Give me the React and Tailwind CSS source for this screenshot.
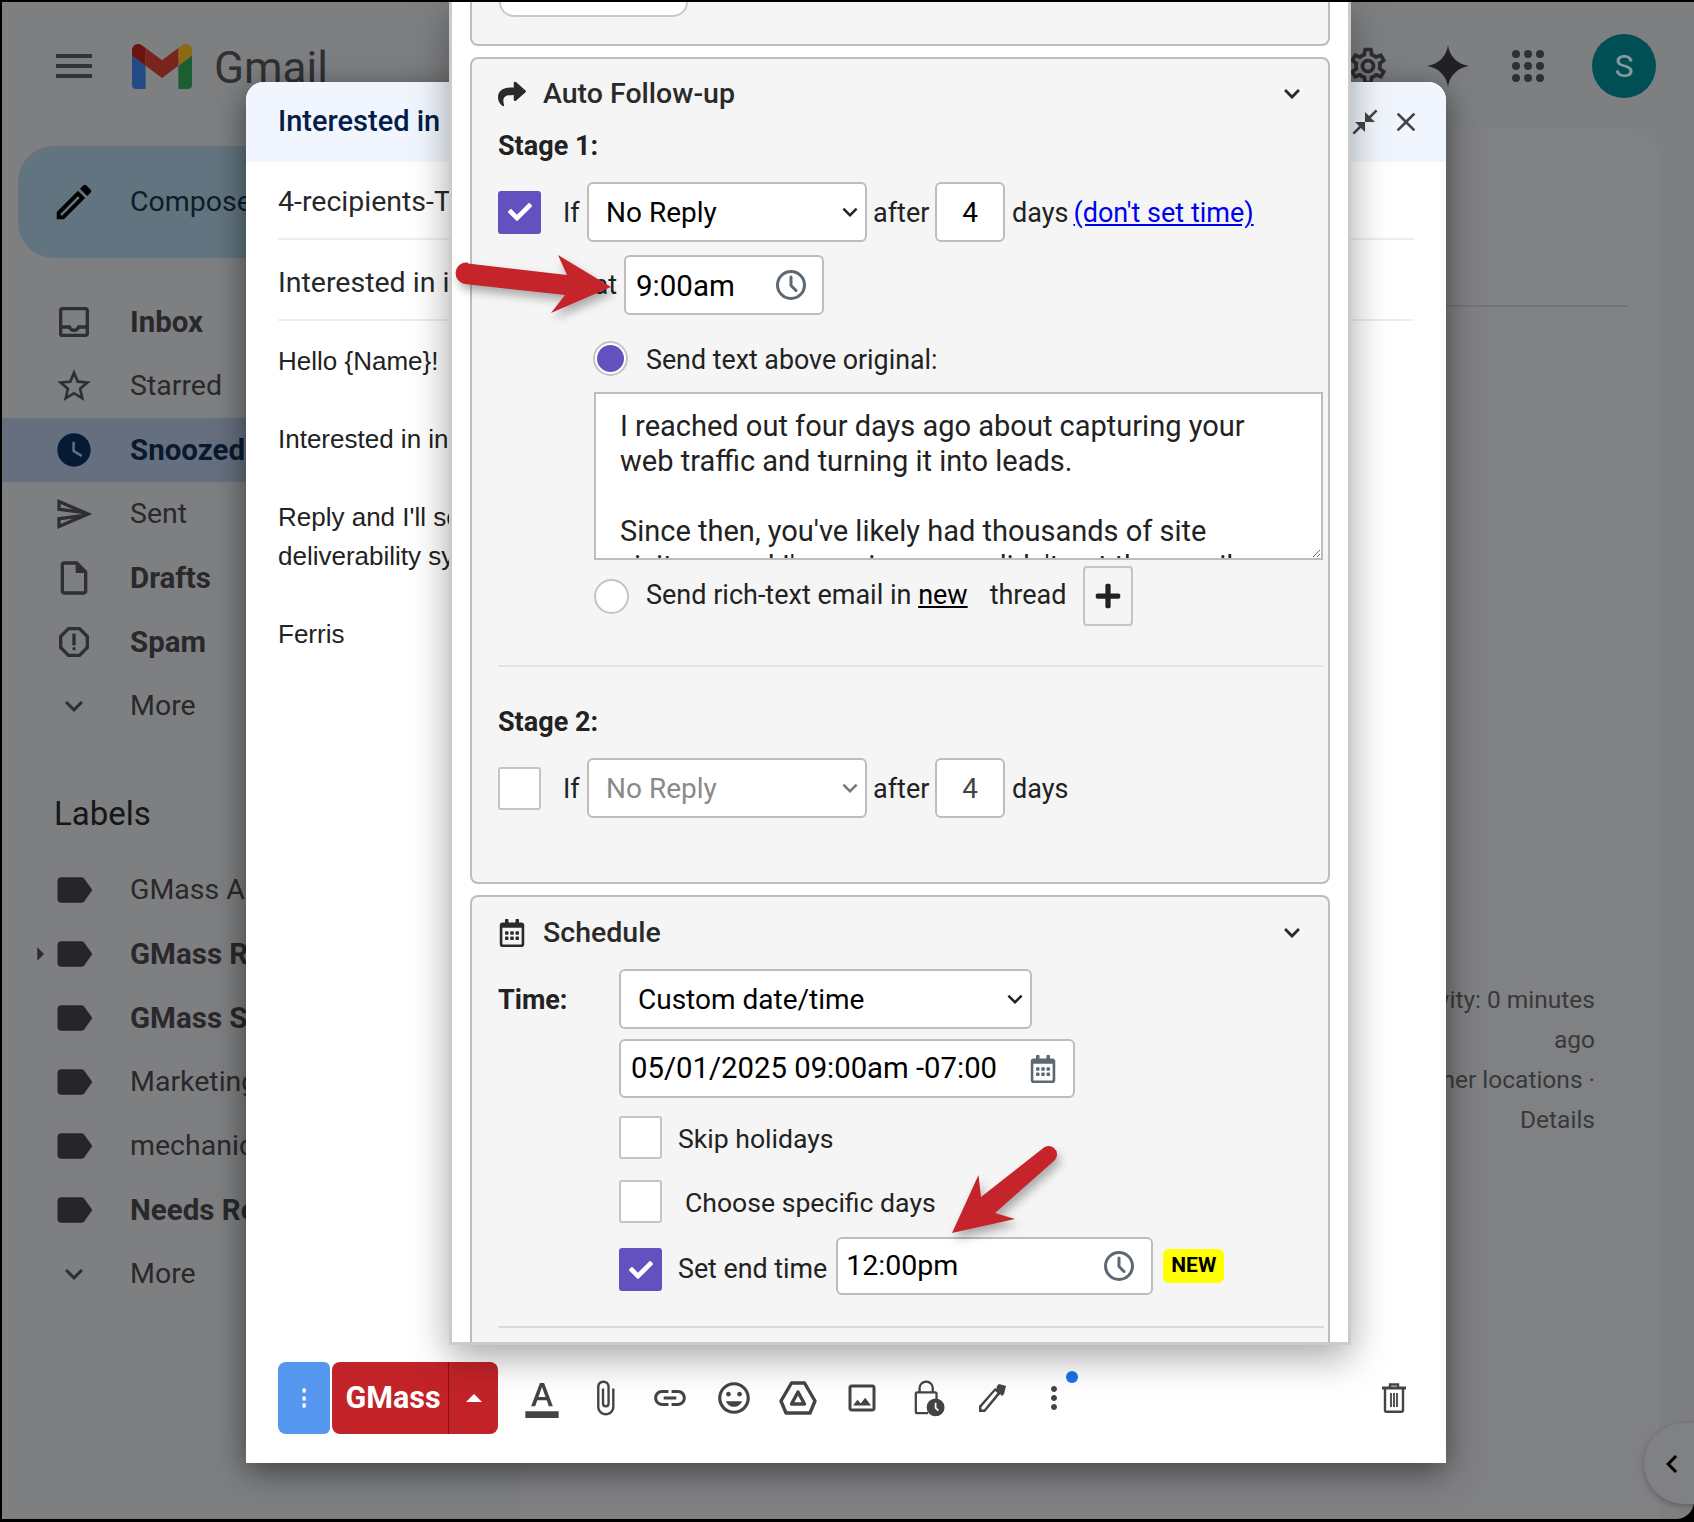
import React from "react";
import {
  MdMenu, MdOutlineEdit, MdOutlineInbox, MdOutlineStarBorder, MdWatchLater, MdOutlineSend,
  MdOutlineInsertDriveFile, MdOutlineReport, MdExpandMore, MdLabel, MdArrowRight, MdOutlineSettings,
  MdCloseFullscreen, MdClose, MdOutlineAttachFile, MdLink, MdOutlineInsertEmoticon,
  MdOutlineImage, MdMoreVert, MdChevronLeft, MdKeyboardArrowDown, MdOutlineFormatColorText,
} from "react-icons/md";
import { FaShare, FaRegCalendarAlt, FaPlus, FaChevronDown, FaCheck } from "react-icons/fa";

const navItems = [
  { label: "Inbox", icon: MdOutlineInbox, bold: true },
  { label: "Starred", icon: MdOutlineStarBorder },
  { label: "Snoozed", icon: MdWatchLater, bold: true, active: true },
  { label: "Sent", icon: MdOutlineSend },
  { label: "Drafts", icon: MdOutlineInsertDriveFile, bold: true },
  { label: "Spam", icon: MdOutlineReport, bold: true },
];

const labelItems = [
  { label: "GMass Auto", },
  { label: "GMass Reports", bold: true, caret: true },
  { label: "GMass Scheduled", bold: true },
  { label: "Marketing" },
  { label: "mechanics" },
  { label: "Needs Reply", bold: true },
];

function GmailLogo() {
  return (
    <svg viewBox="52 42 88 66" width="60" height="45">
      <path fill="#224a85" d="M58 108h14V74L52 59v43c0 3.32 2.69 6 6 6" />
      <path fill="#1c5e32" d="M120 108h14c3.32 0 6-2.69 6-6V59l-20 15" />
      <path fill="#8a6a12" d="M120 48v26l20-15v-8c0-7.42-8.47-11.65-14.4-7.2" />
      <path fill="#79241d" d="M72 74V48l24 18 24-18v26L96 92" />
      <path fill="#6a1410" d="M52 51v8l20 15V48l-5.6-4.2c-5.94-4.45-14.4-.22-14.4 7.2" />
    </svg>
  );
}

function AppDots() {
  const spots = [5, 17, 29];
  return (
    <svg width="34" height="34" viewBox="0 0 34 34" fill="#2e2f31">
      {spots.map((y) => spots.map((x) => <circle key={`${x}-${y}`} cx={x} cy={y} r="4" />))}
    </svg>
  );
}

function Clock() {
  return (
    <svg width="32" height="32" viewBox="0 0 32 32" fill="none" stroke="#5c6873" strokeWidth="3" className="shrink-0">
      <circle cx="16" cy="16" r="13.5" />
      <path d="M16 8v8.5l5 5" strokeLinecap="round" />
    </svg>
  );
}

function Box({ checked }) {
  if (checked) {
    return (
      <div className="w-[43px] h-[43px] shrink-0 rounded-[3px] bg-[#6351c0] flex items-center justify-center text-white">
        <FaCheck size={24} />
      </div>
    );
  }
  return <div className="w-[43px] h-[43px] shrink-0 rounded-[3px] bg-white border-2 border-[#c4c4c4]" />;
}

function SelectBox({ text, width, disabled }) {
  return (
    <div className={`${width} h-[60px] shrink-0 rounded-md bg-white border-2 border-[#bdbdbd] pl-[17px] flex items-center justify-between text-[28px] ${disabled ? "text-[#8a8a8a]" : "text-black"}`}>
      <span className="pt-[2px]">{text}</span>
      <MdKeyboardArrowDown size={30} className={disabled ? "text-[#777]" : "text-[#222]"} />
    </div>
  );
}

function NumBox({ disabled }) {
  return (
    <div className={`w-[70px] h-[60px] shrink-0 rounded-md bg-white border-2 border-[#bdbdbd] flex items-center justify-center text-[28px] ${disabled ? "text-[#444]" : "text-black"}`}>
      <span className="pt-[2px]">4</span>
    </div>
  );
}

function Radio({ checked }) {
  return (
    <div className="w-[35px] h-[35px] shrink-0 rounded-full bg-white border-2 border-[#c4c4c4] flex items-center justify-center">
      {checked && <div className="w-[27px] h-[27px] rounded-full bg-[#6351c0]" />}
    </div>
  );
}

function SectionTitle({ icon, title }) {
  return (
    <div className="h-[40px] pr-[23px] flex items-center text-[#2a2a2a]">
      <div className="w-[45px] shrink-0">{icon}</div>
      <span className="flex-1 text-[28.5px] font-medium">{title}</span>
      <FaChevronDown size={18} className="text-[#2a2a2a]" />
    </div>
  );
}

function DriveIcon() {
  return (
    <svg width="38" height="34" viewBox="0 0 38 34" fill="none" stroke="#444" strokeWidth="3.4" strokeLinejoin="round">
      <path d="M12.5 2h13L36 20l-5 12H7L2 20z" />
      <path d="M19 11l6.5 12h-13z" />
    </svg>
  );
}

function LockClockIcon() {
  return (
    <svg width="32" height="40" viewBox="0 0 34 40" fill="none">
      <path d="M7 14V9.500a7 7 0 0 1 14 0V14" stroke="#444" strokeWidth="2.4" />
      <path d="M16 36H4.500A1.500 1.500 0 0 1 3 34.500V15.500A1.500 1.500 0 0 1 4.500 14h19A1.500 1.500 0 0 1 25 15.500V22" stroke="#444" strokeWidth="2.4" />
      <circle cx="24" cy="30" r="9.500" fill="#444" />
      <path d="M24 25v5.500l3 3" stroke="#fff" strokeWidth="1.800" />
    </svg>
  );
}

function PenIcon() {
  return (
    <svg width="30" height="30" viewBox="0 0 30 30" fill="#444">
      <path d="M1 29v-6L17 5l6 5L7 29zM3.500 26.500h2.500L19.500 10l-2.300-2L3.500 24z" />
      <path d="M19 3l2-2 7 2-2 8-2 2-6-6z" />
    </svg>
  );
}

function TrashIcon() {
  return (
    <svg width="26" height="30" viewBox="0 0 26 30" fill="none" stroke="#444" strokeWidth="2.400">
      <path d="M1 5h24" strokeWidth="3" />
      <path d="M9 5V1.500h8V5" />
      <path d="M4 5v22.500a1.200 1.200 0 0 0 1.200 1.200h15.600a1.200 1.200 0 0 0 1.200-1.200V5" />
      <path d="M10 10v14M13 10v14M16 10v14" strokeWidth="1.800" />
    </svg>
  );
}

function Sidebar() {
  return (
    <aside className="w-[520px] shrink-0">
      <div className="ml-[16px] mt-[18px] h-[112px] rounded-[36px] bg-[#62747f] flex items-center text-[#0e1d29] text-[28.5px]">
        <MdOutlineEdit size={46} className="ml-[33px] mr-[33px] text-black" />
        <span>Compose</span>
      </div>

      <nav className="mt-[32px]">
        {navItems.map((item) => (
          <div key={item.label} className={`h-[64px] flex items-center pl-[52px] rounded-r-[32px] ${item.active ? "bg-[#666f7e] text-[#081a30]" : "text-[#29292b]"} ${item.bold ? "font-bold text-[29.5px]" : "text-[28.5px]"}`}>
            <item.icon size={40} className={`mr-[36px] ${item.active ? "text-[#041a35]" : "text-[#2e2f31]"}`} />
            <span>{item.label}</span>
          </div>
        ))}
        <div className="h-[64px] flex items-center pl-[54px] text-[28.5px] text-[#29292b]">
          <MdExpandMore size={36} className="mr-[38px] text-[#2e2f31]" />
          <span>More</span>
        </div>
      </nav>

      <div className="mt-[56px] h-[40px] pl-[52px] flex items-center text-[33px] text-[#151618]">Labels</div>

      <div className="mt-[24px]">
        {labelItems.map((item) => (
          <div key={item.label} className={`h-[64px] flex items-center text-[#29292b] ${item.bold ? "font-bold text-[29.5px]" : "text-[28.5px]"}`}>
            <div className="w-[50px] shrink-0 flex justify-end text-[#2b2b2d]">
              {item.caret && <MdArrowRight size={32} className="-mr-[4px]" />}
            </div>
            <MdLabel size={44} className="mr-[34px] text-[#262628]" />
            <span className="whitespace-nowrap">{item.label}</span>
          </div>
        ))}
        <div className="h-[64px] flex items-center pl-[54px] text-[28.5px] text-[#29292b]">
          <MdExpandMore size={36} className="mr-[38px] text-[#2e2f31]" />
          <span>More</span>
        </div>
      </div>
    </aside>
  );
}

function ComposeWindow() {
  return (
    <div className="absolute left-[246px] top-[82px] w-[1200px] h-[1381px] rounded-t-[18px] bg-white flex flex-col shadow-[0_8px_32px_rgba(0,0,0,0.5)] font-[Roboto,sans-serif]">
      <div className="h-[80px] shrink-0 rounded-t-[18px] bg-[#f1f5fd] pl-[32px] pr-[24px] flex items-center justify-between">
        <span className="text-[29px] font-medium text-[#041e49]">Interested in</span>
        <div className="flex items-center gap-[10px] text-[#444]">
          <MdCloseFullscreen size={30} />
          <MdClose size={32} />
        </div>
      </div>

      <div className="mx-[32px] h-[78px] pt-[4px] border-b-2 border-[#eceff1] flex items-center text-[28.5px] text-[#26282a] whitespace-nowrap">4-recipients-Test</div>
      <div className="mx-[32px] h-[81px] pt-[7px] border-b-2 border-[#eceff1] flex items-center text-[28.5px] text-[#26282a] whitespace-nowrap">Interested in increasing</div>

      <div className="pl-[32px] pt-[21px] font-['Liberation_Sans',Arial,sans-serif] text-[26px] leading-[39px] text-[#222] whitespace-nowrap">
        <div>Hello {"{Name}"}!</div>
        <div className="h-[39px]" />
        <div>Interested in increasing your open rates?</div>
        <div className="h-[39px]" />
        <div>Reply and I'll send you the details on our</div>
        <div>deliverability system.</div>
        <div className="h-[39px]" />
        <div>Ferris</div>
      </div>

      <div className="mt-auto mb-[29px] pl-[32px] pr-[20px] flex items-center">
        <div className="w-[52px] h-[72px] rounded-l-lg rounded-r-md bg-[#5596ee] flex items-center justify-center text-white">
          <span className="text-[22px] font-bold leading-none">⋮</span>
        </div>
        <div className="ml-[2px] w-[166px] h-[72px] rounded-lg bg-[#c22329] flex text-white">
          <div className="w-[117px] pl-[6px] border-r border-[#8f0f12] flex items-center justify-center text-[30.5px] font-bold">GMass</div>
          <div className="flex-1 flex items-center justify-center">
            <div className="w-0 h-0 border-x-[8px] border-x-transparent border-b-[8px] border-b-white" />
          </div>
        </div>
        <div className="ml-[12px] flex items-center text-[#444]">
          <div className="w-[64px] flex justify-center"><MdOutlineFormatColorText size={40} /></div>
          <div className="w-[60px] flex justify-center"><MdOutlineAttachFile size={38} className="translate-x-[1px]" /></div>
          <div className="w-[68px] flex justify-center"><MdLink size={38} className="translate-x-[2px]" /></div>
          <div className="w-[64px] flex justify-center"><MdOutlineInsertEmoticon size={38} /></div>
          <div className="w-[63px] flex justify-center"><DriveIcon /></div>
          <div className="w-[65px] flex justify-center"><MdOutlineImage size={36} /></div>
          <div className="w-[69px] flex justify-center"><LockClockIcon /></div>
          <div className="w-[59px] flex justify-center"><PenIcon /></div>
          <div className="w-[63px] flex justify-center relative">
            <MdMoreVert size={36} />
            <div className="absolute left-[44px] -top-[9px] w-[12px] h-[12px] rounded-full bg-[#1a73e8]" />
          </div>
        </div>
        <div className="ml-auto w-[64px] flex justify-center"><TrashIcon /></div>
      </div>
    </div>
  );
}

function GMassPanel() {
  return (
    <div className="absolute left-[449px] top-[2px] w-[902px] h-[1343px] overflow-hidden bg-white border-x-[3px] border-b-[3px] border-[#cbcbcb] px-[18px] shadow-[0_12px_36px_rgba(0,0,0,0.35)] font-[Roboto,sans-serif] text-[#222]">
      <section className="h-[44px] rounded-b-lg border-x-2 border-b-2 border-[#bdbdbd] bg-[#f5f5f5]">
        <div className="ml-[27px] w-[189px] h-[15px] rounded-b-[18px] bg-white border-x-2 border-b-2 border-[#c9c9c9]" />
      </section>

      <section className="mt-[11px] h-[827px] rounded-lg border-2 border-[#bdbdbd] bg-[#f5f5f5] pl-[26px] pr-[4px] pt-[15px]">
        <SectionTitle icon={<FaShare size={28} className="text-[#2a2a2a]" />} title="Auto Follow-up" />
        <div className="mt-[16px] h-[32px] flex items-center text-[27px] font-bold">Stage 1:</div>

        <div className="mt-[20px] flex items-center text-[27px]">
          <Box checked />
          <span className="ml-[22px] w-[24px] pt-[3px]">If</span>
          <SelectBox text="No Reply" width="w-[280px]" />
          <span className="ml-[6px] w-[62px] pt-[3px]">after</span>
          <NumBox />
          <span className="ml-[7px] pt-[3px]">days</span>
          <a className="ml-[5px] pt-[3px] text-[#0000ee] underline">(don't set time)</a>
        </div>

        <div className="mt-[13px] flex items-center text-[27px]">
          <span className="w-[119px] text-right">at</span>
          <div className="ml-[7px] w-[200px] h-[60px] rounded-md bg-white border-2 border-[#bdbdbd] pl-[10px] pr-[15px] flex items-center justify-between text-[29.5px] text-black">
            <span className="pt-[2px]">9:00am</span>
            <Clock />
          </div>
        </div>

        <div className="mt-[25px] ml-[95px] h-[36px] flex items-center gap-[18px] text-[26.8px]">
          <Radio checked />
          <span className="pt-[4px]">Send text above original:</span>
        </div>

        <textarea
          readOnly
          className="mt-[16px] ml-[96px] block w-[729px] h-[168px] overflow-hidden bg-white border-2 border-[#bdbdbd] pt-[15px] pl-[24px] pr-[60px] text-[29px] leading-[35px] text-[#222] outline-none"
          defaultValue={"I reached out four days ago about capturing your\nweb traffic and turning it into leads.\n\nSince then, you've likely had thousands of site\nvisitors, and I'm curious: you didn't get the emails"}
        />

        <div className="mt-[6px] ml-[96px] flex items-center text-[27px]">
          <Radio />
          <span className="ml-[17px] pb-[2px]">Send rich-text email in <span className="underline text-black">new</span></span>
          <span className="ml-[22px] pb-[2px]">thread</span>
          <div className="ml-[16px] w-[50px] h-[60px] rounded-[4px] border-2 border-[#c4c4c4] flex items-center justify-center text-[#222]">
            <FaPlus size={28} />
          </div>
        </div>

        <div className="mt-[39px] h-[2px] bg-[#e3e3e3]" />

        <div className="mt-[39px] h-[32px] flex items-center text-[27px] font-bold">Stage 2:</div>

        <div className="mt-[20px] flex items-center text-[27px]">
          <Box />
          <span className="ml-[22px] w-[24px] pt-[3px]">If</span>
          <SelectBox text="No Reply" width="w-[280px]" disabled />
          <span className="ml-[6px] w-[62px] pt-[3px]">after</span>
          <NumBox disabled />
          <span className="ml-[7px] pt-[3px]">days</span>
        </div>
      </section>

      <section className="mt-[11px] h-[520px] rounded-t-lg border-x-2 border-t-2 border-[#bdbdbd] bg-[#f5f5f5] pl-[26px] pr-[4px] pt-[16px]">
        <SectionTitle icon={<FaRegCalendarAlt size={28} className="text-[#2a2a2a]" />} title="Schedule" />

        <div className="mt-[16px] flex items-center">
          <span className="w-[121px] text-[27px] font-bold mt-[2px]">Time:</span>
          <SelectBox text="Custom date/time" width="w-[413px]" />
        </div>

        <div className="ml-[121px]">
          <div className="mt-[10px] w-[456px] h-[59px] rounded-md bg-white border-2 border-[#bdbdbd] pl-[10px] pr-[16px] flex items-center justify-between text-[29.3px] text-black">
            <span>05/01/2025 09:00am -07:00</span>
            <FaRegCalendarAlt size={28} className="text-[#5c6873]" />
          </div>

          <div className="mt-[18px] flex items-center text-[26.6px]">
            <Box />
            <span className="ml-[16px] pt-[3px]">Skip holidays</span>
          </div>

          <div className="mt-[21px] flex items-center text-[26.6px]">
            <Box />
            <span className="ml-[23px] pt-[3px]">Choose specific days</span>
          </div>

          <div className="mt-[14px] flex items-center text-[26.8px]">
            <div className="mt-[7px]"><Box checked /></div>
            <span className="ml-[16px] mt-[6px]">Set end time</span>
            <div className="ml-[9px] w-[317px] h-[58px] rounded-md bg-white border-2 border-[#bdbdbd] pl-[8px] pr-[16px] flex items-center justify-between text-[28.5px] text-black">
              <span>12:00pm</span>
              <Clock />
            </div>
            <div className="ml-[10px] h-[34px] px-[8px] rounded-md bg-[#ffff00] flex items-center text-[21px] font-bold text-black">NEW</div>
          </div>
        </div>

        <div className="mt-[31px] h-[2px] bg-[#d9d9d9]" />
      </section>
    </div>
  );
}

// the two red callout arrows sit on top of the panel
function Arrows() {
  return (
    <>
      <svg className="absolute left-[450px] top-[250px] drop-shadow-[3px_6px_5px_rgba(0,0,0,0.3)]" width="170" height="70" viewBox="450 250 170 70">
        <path fill="#c4242a" d="M468 263.500L567 275l-9-20 53 32-60 26 14-18-100-11a10 10 0 0 1 3-21.500z" />
      </svg>
      <svg className="absolute left-[945px] top-[1140px] drop-shadow-[3px_6px_5px_rgba(0,0,0,0.3)]" width="120" height="100" viewBox="945 1140 120 100">
        <path fill="#c4242a" d="M1042 1149a8.500 8.500 0 0 1 13 11l-60 53 20 6-63 14 26.500-58 2.500 22z" />
      </svg>
    </>
  );
}

export default function App() {
  return (
    <div className="relative w-[1694px] h-[1522px] overflow-hidden bg-black pt-[2px] pl-[2px] pb-[3px] font-[Roboto,sans-serif]">
      <div className="h-full flex flex-col rounded-br-[18px] bg-[#7e7f81] overflow-hidden">
        <header className="h-[126px] pt-[2px] shrink-0 flex items-center pr-[38px]">
          <MdMenu size={48} className="ml-[48px] text-[#333436]" />
          <div className="ml-[34px] shrink-0"><GmailLogo /></div>
          <span className="ml-[22px] mt-[3px] text-[44px] text-[#2f3032]">Gmail</span>
          <div className="ml-auto flex items-center text-[#2e2f31]">
            <MdOutlineSettings size={44} className="mr-[36px]" />
            <svg width="44" height="44" viewBox="0 0 44 44" className="mr-[41px]">
              <path fill="#212224" d="M22 1c1.500 11 9 19 21 21-12 2-19.500 10-21 21-1.500-11-9-19-21-21 12-2 19.500-10 21-21z" />
            </svg>
            <div className="mr-[47px]"><AppDots /></div>
            <div className="w-[64px] h-[64px] rounded-full bg-[#004f55] flex items-center justify-center text-[32px] text-[#8a9a9c]">S</div>
          </div>
        </header>

        <div className="flex-1 flex">
          <Sidebar />
          <main className="w-[1137px] shrink-0 rounded-t-[24px] bg-[#808183] pt-[177px] pr-[64px] text-right text-[24.5px] leading-[40px] text-[#38393b]">
            <div className="h-[2px] ml-[900px] -mr-[32px] bg-[#737476]" />
            <div className="mt-[673px] whitespace-nowrap">
              <div>Last account activity: 0 minutes</div>
              <div>ago</div>
              <div>Open in 1 other locations ·</div>
              <div>Details</div>
            </div>
          </main>
        </div>
      </div>

      <ComposeWindow />
      <GMassPanel />
      <Arrows />

      <div className="absolute left-[1644px] top-[1423px] w-[80px] h-[81px] rounded-l-full bg-[#808183] shadow-[0_2px_6px_rgba(0,0,0,0.25)] flex items-center pl-[10px] text-black">
        <MdChevronLeft size={36} />
      </div>
    </div>
  );
}
